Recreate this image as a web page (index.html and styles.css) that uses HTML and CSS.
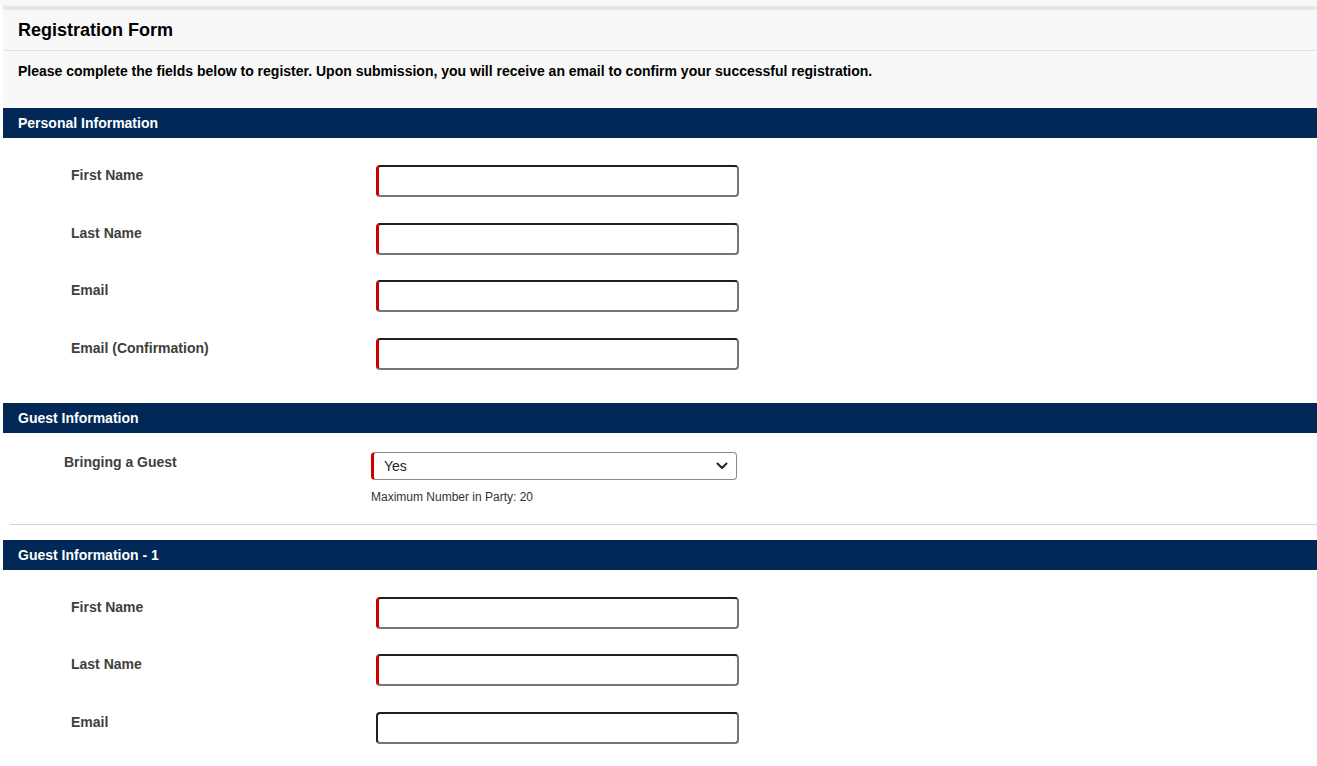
FILE: index.html
```html
<!DOCTYPE html>
<html lang="en">
<head>
  <meta charset="UTF-8">
  <meta name="viewport" content="width=device-width, initial-scale=1.0">
  <title>Registration Form</title>
  <link rel="stylesheet" href="styles.css">
</head>
<body>
  <div class="page">
    <div class="header">
      <h1 class="title">Registration Form</h1>
      <p class="intro">Please complete the fields below to register. Upon submission, you will receive an email to confirm your successful registration.</p>
    </div>

    <div class="section-bar">Personal Information</div>
    <div class="section-body">
      <div class="row">
        <label class="label" for="firstName">First Name</label>
        <input class="field required" type="text" id="firstName">
      </div>
      <div class="row">
        <label class="label" for="lastName">Last Name</label>
        <input class="field required" type="text" id="lastName">
      </div>
      <div class="row">
        <label class="label" for="email">Email</label>
        <input class="field required" type="text" id="email">
      </div>
      <div class="row">
        <label class="label" for="emailConfirm">Email (Confirmation)</label>
        <input class="field required" type="text" id="emailConfirm">
      </div>
    </div>

    <div class="section-bar">Guest Information</div>
    <div class="section-body guest-body">
      <div class="row row-shift">
        <label class="label" for="bringGuest">Bringing a Guest</label>
        <div class="select-col">
          <div class="select-wrap">
            <select class="select required" id="bringGuest">
              <option>Yes</option>
              <option>No</option>
            </select>
            <svg class="chevron" width="12" height="8" viewBox="0 0 12 8">
              <path d="M1.5 1.5 L6 6 L10.5 1.5" fill="none" stroke="#222" stroke-width="2" stroke-linecap="round" stroke-linejoin="round"/>
            </svg>
          </div>
          <p class="help">Maximum Number in Party: 20</p>
        </div>
      </div>
    </div>
    <hr class="divider">

    <div class="section-bar">Guest Information - 1</div>
    <div class="section-body">
      <div class="row">
        <label class="label" for="guestFirst">First Name</label>
        <input class="field required" type="text" id="guestFirst">
      </div>
      <div class="row">
        <label class="label" for="guestLast">Last Name</label>
        <input class="field required" type="text" id="guestLast">
      </div>
      <div class="row">
        <label class="label" for="guestEmail">Email</label>
        <input class="field" type="text" id="guestEmail">
      </div>
    </div>
  </div>
</body>
</html>
```

FILE: styles.css
```css
/* Global Styles */
body {
  font-family: "Liberation Sans", Arial, sans-serif;
  background-color: #fff;
  margin: 0;
  color: #000;
}

.page {
  padding: 6px 0 0 3px;
  background: linear-gradient(#f8f8f8, #f8f8f8) top / 100% 6px no-repeat;
}

/* Header */
.header {
  background-color: #f8f8f8;
  border-top: 4px solid #e9e5e2;
  height: 98px;
}

.title {
  margin: 0;
  height: 40px;
  line-height: 40px;
  padding-left: 15px;
  font-size: 18px;
  font-weight: bold;
  color: #000;
  border-bottom: 1px solid #e3e3e3;
}

.intro {
  margin: 0;
  padding: 12px 0 0 15px;
  font-size: 14px;
  font-weight: bold;
  line-height: 16px;
  color: #000;
}

/* Section bars */
.section-bar {
  background-color: #012856;
  color: #fff;
  height: 30px;
  line-height: 30px;
  padding-left: 15px;
  font-size: 14px;
  font-weight: bold;
}

.section-body {
  display: flex;
  flex-direction: column;
  gap: 25.5px;
  padding: 27px 0 33px;
}

.guest-body {
  padding: 19px 0 0;
}

.row {
  display: flex;
  align-items: flex-start;
  padding-left: 68px;
}

.row-shift {
  padding-left: 61px;
}

.label {
  width: 305px;
  flex-shrink: 0;
  padding-top: 2px;
  font-size: 14px;
  font-weight: bold;
  line-height: 16px;
  color: #3e3e3c;
}

.row-shift .label {
  width: 307px;
}

.field {
  box-sizing: border-box;
  width: 363px;
  height: 32px;
  margin: 0;
  padding: 0 8px;
  font-family: inherit;
  font-size: 14px;
  background: #fff;
  border: 2px solid #767676;
  border-top-color: #1f1f1f;
  border-left-color: #1f1f1f;
  border-radius: 4px;
}

.required {
  border-left: 3px solid #cc0000;
}

/* Select */
.select-col {
  display: flex;
  flex-direction: column;
}

.select-wrap {
  position: relative;
  width: 366px;
}

.select {
  appearance: none;
  -webkit-appearance: none;
  box-sizing: border-box;
  width: 366px;
  height: 28px;
  margin: 0;
  padding: 0 0 0 10px;
  font-family: inherit;
  font-size: 14px;
  color: #222;
  background: #fff;
  border: 1px solid #8a8a8a;
  border-radius: 4px;
}

.select.required {
  border-left: 3px solid #cc0000;
}

.chevron {
  position: absolute;
  right: 9px;
  top: 10px;
  pointer-events: none;
}

.help {
  margin: 10px 0 0;
  font-size: 12px;
  line-height: 14px;
  color: #333;
}

.divider {
  border: none;
  border-top: 1px solid #d4d4d4;
  margin: 20px 0 15px 7px;
}
```
